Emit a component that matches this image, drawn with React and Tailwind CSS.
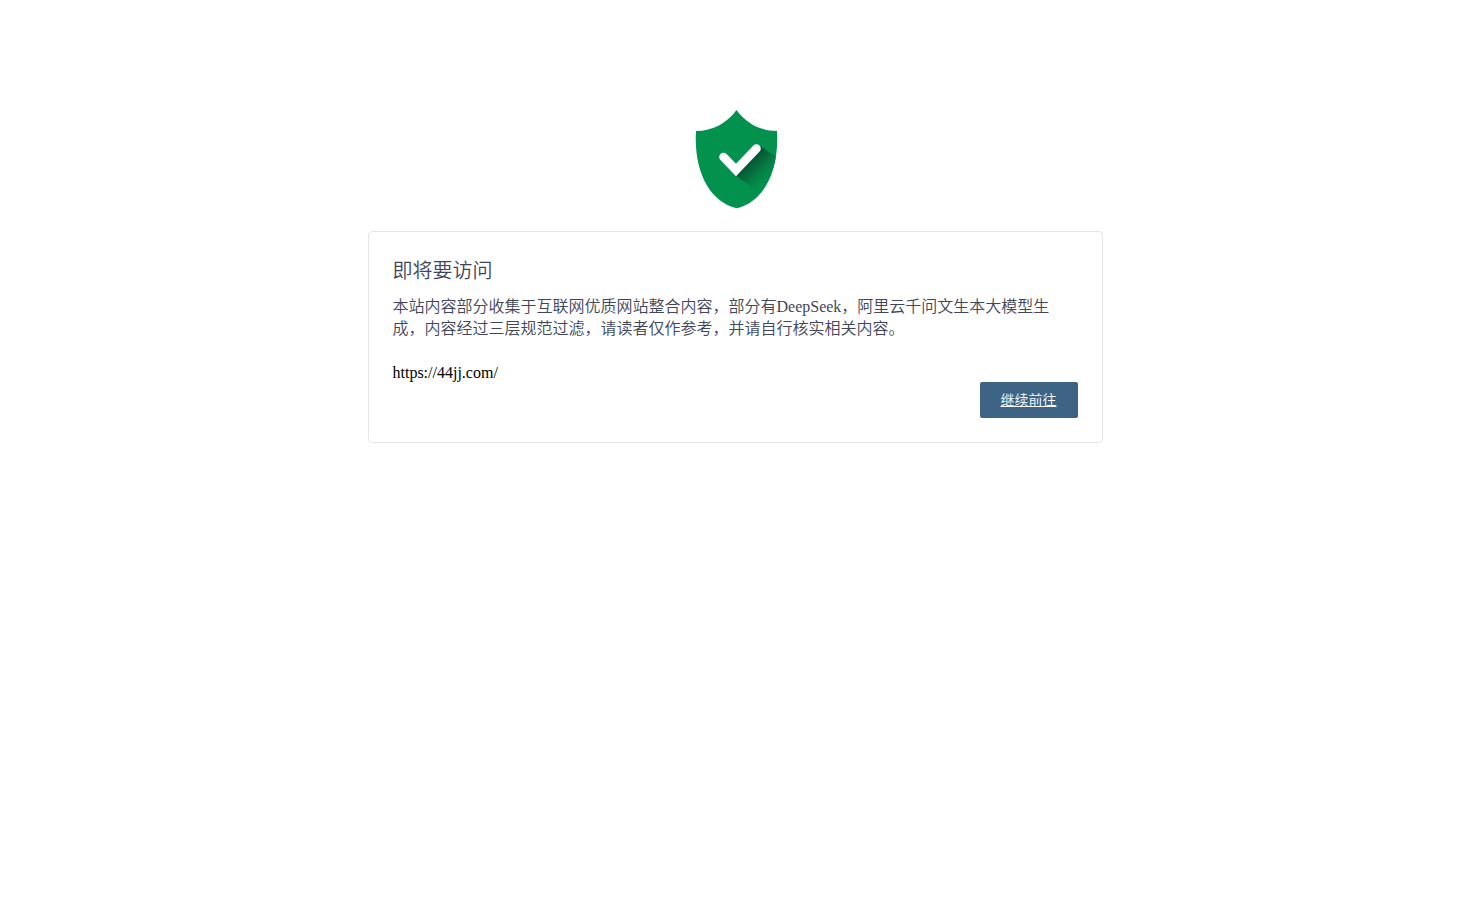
function ShieldIcon() {
  return (
    <svg viewBox="0 0 100 115" className="h-[115px] w-[100px]" role="img" aria-label="安全">
      <defs>
        <linearGradient id="shade" x1="60" y1="59" x2="82" y2="81" gradientUnits="userSpaceOnUse">
          <stop offset="0" stopColor="#044828" />
          <stop offset="0.3" stopColor="#056237" />
          <stop offset="0.65" stopColor="#057f45" />
          <stop offset="1" stopColor="#03914e" />
        </linearGradient>
        <clipPath id="shield">
          <path d="M51.5 10C61 23 75 31 92 31C94.5 70 79 102 51.5 108.2C24 102 8.5 70 11 31C28 31 42 23 51.5 10Z" />
        </clipPath>
      </defs>
      <g clipPath="url(#shield)">
        <rect width="100" height="115" fill="#03914e" />
        <path d="M51.5 76L75 46L96 60L96 78L76 94Z" fill="url(#shade)" />
      </g>
      <path
        d="M38.5 57L51 70L71.5 48.5"
        fill="none"
        stroke="#fff"
        strokeWidth="8.6"
        strokeLinecap="round"
      />
    </svg>
  );
}

export default function App() {
  return (
    <main className="flex flex-col items-center pt-[100px] font-['Liberation_Serif','Noto_Sans_CJK_SC',serif] text-base font-[350] text-black">
      <ShieldIcon />
      <section className="mt-4 w-1/2 rounded border border-[#e4e7ea] p-6">
        <h1 className="mb-2.5 text-xl leading-[30px] font-[350] text-[#41465a]">即将要访问</h1>
        <p className="leading-[22px] text-[#41465a]">
          本站内容部分收集于互联网优质网站整合内容，部分有DeepSeek，阿里云千问文生本大模型生成，内容经过三层规范过滤，请读者仅作参考，并请自行核实相关内容。
        </p>
        <p className="mt-6 leading-[18px]">https://44jj.com/</p>
        <div className="flex justify-end">
          <a
            href="https://44jj.com/"
            className="rounded-xs bg-[#3d6485] px-[21px] pt-[9px] pb-[7px] text-sm leading-5 text-white underline"
          >
            继续前往
          </a>
        </div>
      </section>
    </main>
  );
}
